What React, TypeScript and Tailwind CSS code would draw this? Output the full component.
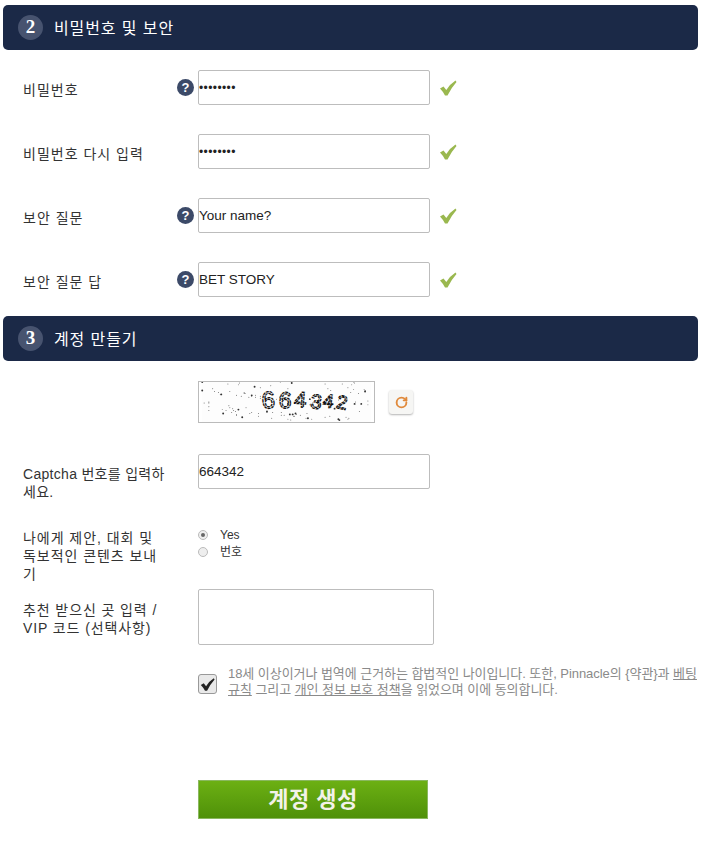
import { RotateCw } from "lucide-react";

const font = "font-['Liberation_Sans','Noto_Sans_CJK_KR',sans-serif]";

// deterministic speckle for the captcha image
const specks = Array.from({ length: 130 }, (_, i) => ({
  x: (i * 73 + (i * i) % 37) % 176,
  y: (i * 29 + (i * i * 3) % 17) % 41,
  r: i % 5 === 0 ? 1 : 0.5,
}));

const captchaDigits = [
  { ch: "6", x: 63, y: 28, size: 25, rot: -4 },
  { ch: "6", x: 80, y: 27, size: 24, rot: 3 },
  { ch: "4", x: 96, y: 26, size: 23, rot: 4 },
  { ch: "3", x: 113, y: 27, size: 21, rot: 8 },
  { ch: "4", x: 126, y: 26, size: 20, rot: 8 },
  { ch: "2", x: 140, y: 27, size: 20, rot: 12 },
];

function SwooshCheck({ color, size }: { color: string; size: number }) {
  return (
    <svg width={size} height={size} viewBox="0 0 18 18" className="shrink-0">
      <path
        d="M1 9.5 L4.5 7.5 L7.3 11 Q11 5 16.5 1.5 L17.5 3 Q12.5 8.5 8.5 16.5 L6 16.5 Q4 12.5 1 9.5Z"
        fill={color}
      />
    </svg>
  );
}

function SectionHeader({ num, title }: { num: number; title: string }) {
  return (
    <div className="ml-[3px] flex h-[45px] w-[695px] items-center rounded-[5px] bg-[#1b2947] pl-[15px]">
      <span className="flex h-[25px] w-[25px] items-center justify-center rounded-full bg-[#47536f] font-['Liberation_Serif',serif] text-[19px] font-bold text-white">
        {num}
      </span>
      <span className="ml-[11px] pt-[2px] text-[16px] tracking-[0.9px] text-white">{title}</span>
    </div>
  );
}

function HelpIcon() {
  return (
    <span className="absolute left-[177px] top-[9px] flex h-[17px] w-[17px] items-center justify-center rounded-full bg-[#3c4a68] text-[13px] font-bold leading-none text-white">
      ?
    </span>
  );
}

function FieldRow({
  label,
  value,
  help,
  mono,
}: {
  label: string;
  value: string;
  help?: boolean;
  mono?: boolean;
}) {
  return (
    <div className="relative flex h-[35px] items-center">
      <label className="w-[198px] pl-[23px] pt-[6px] text-[14px] tracking-[1px] text-[#333]">{label}</label>
      {help && <HelpIcon />}
      <div
        className={`flex h-[35px] w-[232px] items-center rounded-[2px] border border-[#bdbdbd] text-[#222] ${
          mono ? "text-[12px] tracking-[0.4px]" : "pt-[2px] text-[13.5px]"
        }`}
      >
        {value}
      </div>
      <span className="ml-[9px]">
        <SwooshCheck color="#9ab84f" size={18} />
      </span>
    </div>
  );
}

export default function App() {
  return (
    <div className={`${font} min-h-[846px] w-[707px] bg-white pt-[5px]`}>
      <SectionHeader num={2} title="비밀번호 및 보안" />

      <div className="mt-[20px] flex flex-col gap-[29px]">
        <FieldRow label="비밀번호" value="••••••••" help mono />
        <FieldRow label="비밀번호 다시 입력" value="••••••••" mono />
        <FieldRow label="보안 질문" value="Your name?" help />
        <FieldRow label="보안 질문 답" value="BET STORY" help />
      </div>

      <div className="mt-[19px]">
        <SectionHeader num={3} title="계정 만들기" />
      </div>

      {/* Captcha */}
      <div className="mt-[20px] flex items-center pl-[198px]">
        <svg width="177" height="42" viewBox="0 0 177 42" className="border border-[#bbb]">
          <rect width="177" height="42" fill="#fdfdfd" />
          {specks.map((s, i) => (
            <circle key={i} cx={s.x} cy={s.y} r={s.r} fill="#333" />
          ))}
          {captchaDigits.map((d, i) => (
            <text
              key={i}
              x={d.x}
              y={d.y}
              fontSize={d.size}
              fontFamily="Liberation Sans"
              fill="#fdfdfd"
              stroke="#111"
              strokeWidth="1.3"
              strokeDasharray="3 0.8"
              transform={`rotate(${d.rot} ${d.x} ${d.y})`}
            >
              {d.ch}
            </text>
          ))}
        </svg>
        <div className="ml-[14px] flex h-[24px] w-[24px] items-center justify-center rounded-[3px] bg-[#f6f6f4] shadow-[0_1px_2px_rgba(0,0,0,0.3)]">
          <RotateCw className="text-[#e08a3c]" size={13} strokeWidth={3.5} />
        </div>
      </div>

      <div className="mt-[31px] flex">
        <label className="w-[198px] pl-[23px] pr-[30px] pt-[11px] text-[14px] leading-[18px] tracking-[0.3px] text-[#333]">
          Captcha 번호를 입력하세요.
        </label>
        <div className="flex h-[35px] w-[232px] items-center rounded-[2px] border border-[#bdbdbd] pt-[2px] text-[13.5px] text-[#222]">
          664342
        </div>
      </div>

      {/* Marketing opt-in */}
      <div className="mt-[27px] flex h-[56px]">
        <label className="w-[198px] pl-[23px] pr-[32px] pt-[1px] text-[14px] leading-[18px] tracking-[0.95px] text-[#333]">
          나에게 제안, 대회 및 독보적인 콘텐츠 보내기
        </label>
        <div className="flex flex-col gap-[3px] text-[12px] leading-[14px] text-[#333]">
          <div className="flex items-center">
            <span className="flex h-[10px] w-[10px] items-center justify-center rounded-full border border-[#bbb] bg-[#eee]">
              <span className="h-[4px] w-[4px] rounded-full bg-[#666]" />
            </span>
            <span className="ml-[12px]">Yes</span>
          </div>
          <div className="flex items-center">
            <span className="h-[10px] w-[10px] rounded-full border border-[#bbb] bg-[#eee]" />
            <span className="ml-[12px]">번호</span>
          </div>
        </div>
      </div>

      {/* Referral */}
      <div className="mt-[5px] flex">
        <label className="w-[198px] pl-[23px] pr-[30px] pt-[12px] text-[14px] leading-[18px] tracking-[0.9px] text-[#333]">
          추천 받으신 곳 입력 / VIP 코드 (선택사항)
        </label>
        <div className="h-[56px] w-[236px] rounded-[2px] border border-[#bdbdbd]" />
      </div>

      {/* Terms */}
      <div className="mt-[21px] flex pl-[198px]">
        <span className="mt-[8px] flex h-[20px] w-[19px] shrink-0 items-center justify-center rounded-[3px] border border-[#999] bg-[#e9e9e9]">
          <SwooshCheck color="#222" size={15} />
        </span>
        <p className="ml-[11px] w-[470px] whitespace-nowrap text-[13px] leading-[16px] tracking-[-0.05px] text-[#8a8a8a]">
          18세 이상이거나 법역에 근거하는 합법적인 나이입니다. 또한, Pinnacle의 {"{약관}"}과 <span className="underline">베팅</span>
          <br />
          <span className="underline">규칙</span> 그리고 <span className="underline">개인 정보 보호 정책</span>을 읽었으며 이에 동의합니다.
        </p>
      </div>

      <button className="ml-[198px] mt-[82px] flex h-[39px] w-[230px] items-center justify-center border border-[#8ab85f] bg-gradient-to-b from-[#6cb013] to-[#4f9109] text-[22px] font-bold tracking-[0.5px] text-[#f2f2e8]">
        계정 생성
      </button>
    </div>
  );
}
